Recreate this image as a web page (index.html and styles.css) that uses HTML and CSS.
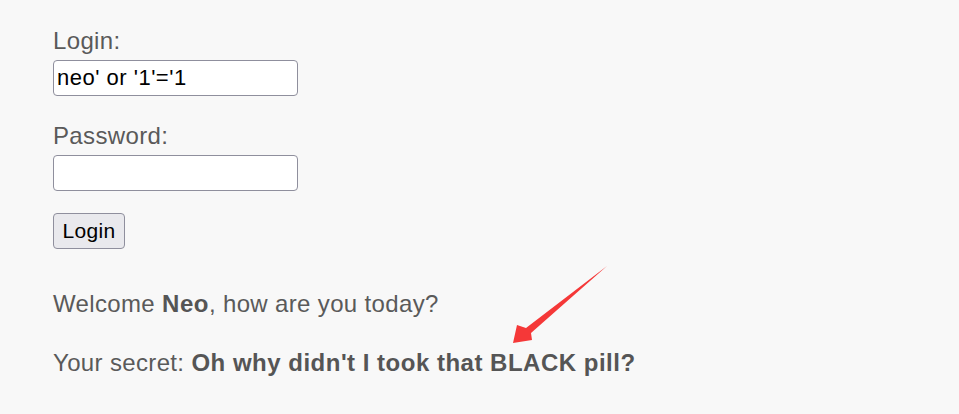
FILE: index.html
```html
<!DOCTYPE html>
<html lang="en">
<head>
<meta charset="utf-8">
<title>Login</title>
<link rel="stylesheet" href="styles.css">
</head>
<body>
<main class="page">
  <form class="login">
    <label class="label" for="login">Login:</label>
    <input class="field" id="login" type="text" value="neo' or '1'='1">
    <label class="label label-gap" for="password">Password:</label>
    <input class="field" id="password" type="password">
    <button class="btn" type="button">Login</button>
  </form>
  <p class="msg msg-welcome">Welcome <b>Neo</b>, how are you today?</p>
  <p class="msg msg-secret">Your secret: <b>Oh why didn't I took that BLACK pill?</b></p>
  <svg class="arrow" width="120" height="90" viewBox="500 260 120 90" aria-hidden="true">
    <polygon points="607,266 531,333 532,340 513,343 517,325 526,328" fill="#f53838"/>
  </svg>
</main>
</body>
</html>
```

FILE: styles.css
```css
html, body {
  margin: 0;
  padding: 0;
  background: #f8f8f8;
}

.page {
  position: relative;
  min-height: 414px;
  box-sizing: border-box;
  padding: 28px 0 0 53px;
  font-family: "Liberation Sans", Arial, sans-serif;
  color: #5a5a5a;
}

.login {
  display: flex;
  flex-direction: column;
  align-items: flex-start;
}

.label {
  display: block;
  font-size: 24px;
  line-height: 26px;
  letter-spacing: 0.35px;
}

.label-gap {
  margin-top: 27px;
}

.field {
  margin: 6px 0 0 0;
  box-sizing: border-box;
  width: 245px;
  height: 36px;
  padding: 0 3px;
  border: 1px solid #8f8f9d;
  border-radius: 4px;
  background: #fff;
  font-family: "Liberation Sans", Arial, sans-serif;
  font-size: 22px;
  letter-spacing: 0.5px;
  color: #000;
  outline: none;
}

.btn {
  margin-top: 22px;
  box-sizing: border-box;
  width: 72px;
  height: 36px;
  padding: 0;
  border: 1px solid #8f8f9d;
  border-radius: 4px;
  background: #e9e9ed;
  font-family: "Liberation Sans", Arial, sans-serif;
  font-size: 21px;
  letter-spacing: 0.3px;
  color: #000;
}

.msg {
  margin: 0;
  font-size: 24px;
  line-height: 26px;
  letter-spacing: 0.35px;
}

.msg b {
  color: #555;
  letter-spacing: 0.5px;
}

.msg-welcome {
  margin-top: 42px;
}

.msg-secret {
  margin-top: 33px;
}

.arrow {
  position: absolute;
  left: 500px;
  top: 260px;
}
```
